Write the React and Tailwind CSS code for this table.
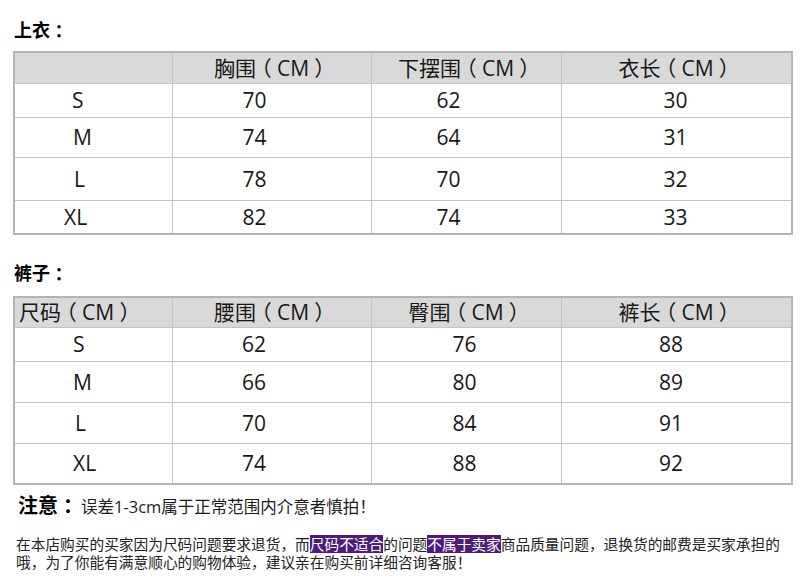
const tops = {
  head: ['', '胸围（CM）', '下摆围（CM）', '衣长（CM）'],
  shift: ['', 'pr-[35px]', 'pr-[36px]', 'pr-[2px]'],
  rows: [
    { h: 'h-[34px]', pad: 'pl-[57px]', cells: ['S', '70', '62', '30'] },
    { h: 'h-[40px]', pad: 'pl-[58px]', cells: ['M', '74', '64', '31'] },
    { h: 'h-[43px]', pad: 'pl-[59px]', cells: ['L', '78', '70', '32'] },
    { h: 'h-[33px]', pad: 'pl-[49px]', cells: ['XL', '82', '74', '33'] },
  ],
};

const pants = {
  head: ['尺码（CM）', '腰围（CM）', '臀围（CM）', '裤长（CM）'],
  shift: ['', 'pr-[36px]', 'pr-[4px]', 'pr-[11px]'],
  rows: [
    { h: 'h-[34px]', pad: 'pl-[58px]', cells: ['S', '62', '76', '88'] },
    { h: 'h-[41px]', pad: 'pl-[58px]', cells: ['M', '66', '80', '89'] },
    { h: 'h-[41px]', pad: 'pl-[60px]', cells: ['L', '70', '84', '91'] },
    { h: 'h-[40px]', pad: 'pl-[58px]', cells: ['XL', '74', '88', '92'] },
  ],
};

const cols = ['w-[158px]', 'w-[199px]', 'w-[190px]', 'flex-1'];

// full-width marks drawn centred in their box, like the YaHei original
const Wide = ({ text }) =>
  text.split(/([（）：])/).map((part, i) =>
    /^[（）：]$/.test(part) ? (
      <span key={i} className="inline-block w-[1em] text-center [font-feature-settings:'halt']">
        {part}
      </span>
    ) : (
      <span key={i}>{part}</span>
    )
  );

const Mark = ({ children }) => (
  <span className="inline-block h-[18px] align-top leading-[18px] bg-[#4e1b7d] text-white">{children}</span>
);

const SizeTable = ({ data, headLeft, headH }) => {
  return (
    <div className="mx-[13px] w-[780px] border-2 border-[#b4b4b4] text-[21px] leading-none text-[#181818]">
      <div className={`flex ${headH} bg-[#d9d9d9]`}>
        {data.head.map((t, i) => (
          <div
            key={i}
            className={`${cols[i]} flex items-center whitespace-nowrap ${
              i === 0 ? `justify-start ${headLeft}` : 'justify-center'
            } ${i < 3 ? 'border-r border-[#c4c4c4]' : ''}`}
          >
            <Wide text={t} />
          </div>
        ))}
      </div>
      {data.rows.map((row, r) => (
        <div key={r} className={`flex ${row.h} border-t border-[#c4c4c4]`}>
          {row.cells.map((c, i) => (
            <div
              key={i}
              className={`${cols[i]} flex items-center ${
                i === 0 ? `justify-start ${row.pad}` : `justify-center ${data.shift[i]}`
              } ${i < 3 ? 'border-r border-[#c4c4c4]' : ''}`}
            >
              {c}
            </div>
          ))}
        </div>
      ))}
    </div>
  );
};

export default function App() {
  return (
    <div
      className="w-[800px] h-[579px] overflow-hidden bg-white text-[#1c1c1c]"
      style={{ fontFamily: '"Open Sans", "Noto Sans CJK SC", sans-serif' }}
    >
      <h2 className="pt-[18px] pl-[14px] text-[18px] leading-[24px] font-bold text-black">
        <Wide text="上衣：" />
      </h2>
      <div className="mt-[9px]">
        <SizeTable data={tops} headLeft="pl-2" headH="h-[30px]" />
      </div>

      <h2 className="mt-[26px] pl-[14px] text-[18px] leading-[24px] font-bold text-black">
        <Wide text="裤子：" />
      </h2>
      <div className="mt-[11px]">
        <SizeTable data={pants} headLeft="pl-[4px]" headH="h-[29px]" />
      </div>

      <div className="mt-[8px] flex items-baseline pl-[18px] leading-[26px]">
        <span className="text-[20px] font-bold text-black">
          <Wide text="注意：" />
        </span>
        <span className="pl-[3px] text-[16.5px]">误差1-3cm属于正常范围内介意者慎拍！</span>
      </div>

      <div
        className="mt-[15px] pl-[16px] whitespace-nowrap text-[14.7px] leading-[18px] text-[#222]"
        style={{ fontFamily: '"Noto Sans CJK SC", sans-serif' }}
      >
        <div className="h-[18px]">
          在本店购买的买家因为尺码问题要求退货，而
          <Mark>尺码不适合</Mark>
          的问题
          <Mark>不属于卖家</Mark>
          商品质量问题，退换货的邮费是买家承担的
        </div>
        <div className="h-[18px]">哦，为了你能有满意顺心的购物体验，建议亲在购买前详细咨询客服！</div>
      </div>
    </div>
  );
}
